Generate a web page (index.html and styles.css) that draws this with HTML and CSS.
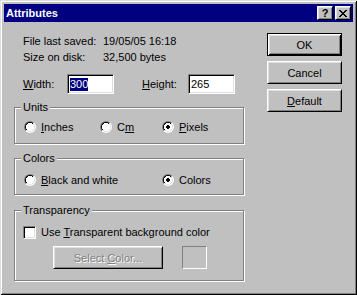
FILE: index.html
```html
<!DOCTYPE html>
<html lang="en">
<head>
    <meta charset="UTF-8">
    <title>Attributes</title>
    <link rel="stylesheet" href="styles.css">
</head>
<body>
    <div class="window">
        <div class="titlebar">
            <span class="title">Attributes</span>
            <div class="caption-buttons">
                <span class="cap-btn help">?</span>
                <span class="cap-btn close">
                    <svg width="8" height="7" viewBox="0 0 8 7"><path d="M0 0h2v1h-2zM6 0h2v1h-2zM1 1h2v1h-2zM5 1h2v1h-2zM2 2h4v1h-4zM3 3h2v1h-2zM2 4h4v1h-4zM1 5h2v1h-2zM5 5h2v1h-2zM0 6h2v1h-2zM6 6h2v1h-2z" fill="#000"/></svg>
                </span>
            </div>
        </div>
        <div class="dialog">
            <div class="main">
                <div class="info">
                    <div class="info-row"><span class="info-label">File last saved:</span><span>19/05/05 16:18</span></div>
                    <div class="info-row"><span class="info-label">Size on disk:</span><span>32,500 bytes</span></div>
                </div>
                <div class="size-row">
                    <span class="size-label"><u>W</u>idth:</span>
                    <div class="edit"><span class="sel">300</span></div>
                    <span class="size-label height"><u>H</u>eight:</span>
                    <div class="edit">265</div>
                </div>
                <div class="group units">
                    <div class="group-title">Units</div>
                    <div class="options units-options">
                        <div class="option"><span class="radio"></span><span><u>I</u>nches</span></div>
                        <div class="option"><span class="radio"></span><span>C<u>m</u></span></div>
                        <div class="option"><span class="radio checked"></span><span><u>P</u>ixels</span></div>
                    </div>
                </div>
                <div class="group colors">
                    <div class="group-title">Colors</div>
                    <div class="options colors-options">
                        <div class="option"><span class="radio"></span><span><u>B</u>lack and white</span></div>
                        <div class="option"><span class="radio checked"></span><span>Colors</span></div>
                    </div>
                </div>
                <div class="group transparency">
                    <div class="group-title">Transparency</div>
                    <div class="option check-row"><span class="check"></span><span>Use <u>T</u>ransparent background color</span></div>
                    <div class="select-row">
                        <div class="btn disabled"><span>Select <u>C</u>olor...</span></div>
                        <div class="swatch"></div>
                    </div>
                </div>
            </div>
            <div class="buttons">
                <div class="btn default">OK</div>
                <div class="btn">Cancel</div>
                <div class="btn"><span><u>D</u>efault</span></div>
            </div>
        </div>
    </div>
</body>
</html>
```

FILE: styles.css
```css
body {
    margin: 0;
    font: 11px "Liberation Sans", Arial, sans-serif;
    color: #000;
    background: #c0c0c0;
}
.window {
    width: 357px;
    height: 295px;
    box-sizing: border-box;
    padding: 4px;
    background: #c0c0c0;
    box-shadow: inset 1px 1px #dfdfdf, inset -1px -1px #000, inset 2px 2px #fff, inset -2px -2px #808080;
}

/* title bar */
.titlebar {
    height: 18px;
    background: #000080;
    color: #fff;
    display: flex;
    align-items: center;
    justify-content: space-between;
    padding: 0 2px 0 2px;
}
.title {
    font-weight: bold;
    font-size: 11px;
}
.caption-buttons {
    display: flex;
    gap: 2px;
}
.cap-btn {
    width: 16px;
    height: 14px;
    box-sizing: border-box;
    background: #c0c0c0;
    border: 1px solid;
    border-color: #fff #000 #000 #fff;
    box-shadow: inset 1px 1px #dfdfdf, inset -1px -1px #808080;
    display: flex;
    align-items: center;
    justify-content: center;
    color: #000;
}
.help {
    font-weight: bold;
    font-size: 11px;
    line-height: 12px;
}

/* body */
.dialog {
    display: flex;
}
.main {
    width: 263px;
}
.info {
    padding: 11px 0 0 19px;
    line-height: 16px;
}
.info-label {
    display: inline-block;
    width: 80px;
}
.size-row {
    display: flex;
    align-items: center;
    margin-top: 9px;
    padding-left: 19px;
}
.size-label {
    width: 44px;
}
.size-label.height {
    width: 46px;
    margin-left: 28px;
}
.edit {
    width: 47px;
    height: 20px;
    box-sizing: border-box;
    background: #fff;
    border: 1px solid;
    border-color: #808080 #fff #fff #808080;
    box-shadow: inset 1px 1px #000, inset -1px -1px #dfdfdf;
    padding: 2px 2px 0;
    line-height: 14px;
}
.sel {
    background: #000080;
    color: #fff;
    display: inline-block;
    line-height: 13px;
}

/* group boxes */
.group {
    margin: 13px 0 0 10px;
    width: 230px;
    box-sizing: border-box;
    border: 1px solid #808080;
    box-shadow: 1px 1px #fff, inset 1px 1px #fff;
    padding: 0 0 8px 9px;
}
.group-title {
    display: table;
    margin: -7px 0 0 -3px;
    padding: 0 2px;
    line-height: 13px;
    background: #c0c0c0;
}
.colors {
    margin-top: 14px;
    padding-bottom: 6px;
}
.transparency {
    margin-top: 15px;
    padding-bottom: 11px;
}
.options {
    display: grid;
    margin-top: 5px;
}
.colors .options {
    margin-top: 7px;
}
.units-options {
    grid-template-columns: 76px 62px auto;
}
.colors-options {
    grid-template-columns: 138px auto;
}
.option {
    display: flex;
    align-items: center;
    height: 16px;
}
.radio {
    width: 12px;
    height: 12px;
    border-radius: 50%;
    margin-right: 5px;
    background: linear-gradient(135deg, #808080 50%, #fff 50%);
}
.radio::before {
    content: '';
    display: block;
    margin: 1px;
    width: 10px;
    height: 10px;
    border-radius: 50%;
    background: radial-gradient(circle, #fff 4px, transparent 4px), linear-gradient(135deg, #000 50%, #dfdfdf 50%);
}
.radio.checked::before {
    background: radial-gradient(circle, #000 2px, #fff 2px, #fff 4px, transparent 4px), linear-gradient(135deg, #000 50%, #dfdfdf 50%);
}
.check-row {
    margin-top: 7px;
}
.check {
    width: 13px;
    height: 13px;
    box-sizing: border-box;
    margin: 0 5px 0 -1px;
    background: #fff;
    border: 1px solid;
    border-color: #808080 #fff #fff #808080;
    box-shadow: inset 1px 1px #000, inset -1px -1px #dfdfdf;
}
.select-row {
    display: flex;
    margin-top: 6px;
    padding-left: 29px;
}
.swatch {
    width: 25px;
    height: 23px;
    box-sizing: border-box;
    margin-left: 19px;
    border: 1px solid;
    border-color: #808080 #fff #fff #808080;
}

/* push buttons */
.buttons {
    display: flex;
    flex-direction: column;
    gap: 5px;
    padding-top: 11px;
}
.btn {
    width: 75px;
    height: 23px;
    box-sizing: border-box;
    border: 1px solid;
    border-color: #fff #000 #000 #fff;
    box-shadow: inset 1px 1px #dfdfdf, inset -1px -1px #808080;
    display: flex;
    align-items: center;
    justify-content: center;
}
.select-row .btn {
    width: 110px;
}
.btn.default {
    border-color: #000;
    box-shadow: inset 1px 1px #fff, inset -1px -1px #000, inset 2px 2px #dfdfdf, inset -2px -2px #808080;
}
.btn.disabled {
    color: #808080;
    text-shadow: 1px 1px #fff;
}
```
